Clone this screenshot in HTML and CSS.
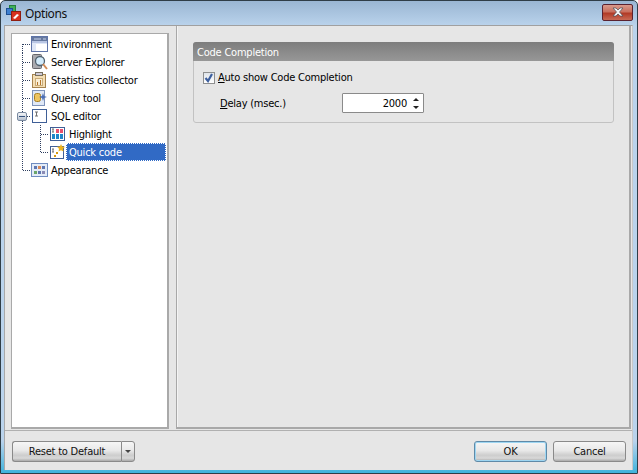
FILE: index.html
```html
<!DOCTYPE html>
<html lang="en">
<head>
    <meta charset="UTF-8">
    <title>Options</title>
    <link rel="stylesheet" href="styles.css">
</head>
<body>
    <div class="window">
        <div class="titlebar">
            <svg class="app-icon" width="16" height="16" viewBox="0 0 16 16">
                <rect x="3.500" y=".5" width="6" height="6" fill="#3fb05a" stroke="#23803c"/>
                <rect x=".5" y="3.500" width="6" height="6" fill="#3c7fd0" stroke="#1d4f94"/>
                <rect x="5.500" y="6.500" width="9" height="9" fill="#d8321e" stroke="#8f1d10"/>
                <path d="M7 13l4-4 2 1-4 4z" fill="#fff"/>
            </svg>
            <span class="title">Options</span>
            <div class="close">
                <svg width="16" height="10" viewBox="0 0 16 10"><path d="M3 1h3l2 2 2-2h3l-3.500 4 3.500 4h-3l-2-2-2 2h-3l3.500-4z" fill="#f2f2f2" stroke="#4a4a55" stroke-width=".7"/></svg>
            </div>
        </div>
        <div class="client">
            <div class="main">
                <ul class="tree">
                    <li class="row">
                        <svg class="lines" width="10" height="18"><path d="M.5 9V18M1 9.500H9" class="dots"/></svg>
                        <svg class="icon" width="17" height="16" viewBox="0 0 17 16"><rect x=".5" y=".5" width="16" height="15" fill="#dfe7f7" stroke="#5f74a8"/><rect x="1" y="1" width="15" height="4" fill="#66799f"/><path d="M3 3h7M12 3h3" stroke="#c9d3ea"/><rect x="1" y="5" width="15" height="2" fill="#b9c6e4"/><rect x="5" y="8" width="11" height="7" fill="#fff"/></svg>
                        <span class="label">Environment</span>
                    </li>
                    <li class="row">
                        <svg class="lines" width="10" height="18"><path d="M.5 0V18M1 9.500H9" class="dots"/></svg>
                        <svg class="icon" width="17" height="16" viewBox="0 0 17 16"><rect x="1.500" y=".5" width="9" height="14" rx="1" fill="#a9a9ae" stroke="#66666b"/><circle cx="9" cy="7" r="4.500" fill="#d3ebfa" stroke="#50616f" stroke-width="1.300"/><path d="M12 10l4 5" stroke="#d08a55" stroke-width="2"/></svg>
                        <span class="label">Server Explorer</span>
                    </li>
                    <li class="row">
                        <svg class="lines" width="10" height="18"><path d="M.5 0V18M1 9.500H9" class="dots"/></svg>
                        <svg class="icon" width="17" height="16" viewBox="0 0 17 16"><rect x="1.500" y="2.500" width="13" height="13" fill="#f4deb4" stroke="#a5834f"/><rect x="4.500" y=".5" width="7" height="3" fill="#cfcbd8" stroke="#77705f"/><rect x="4.500" y="6.500" width="7" height="7" fill="#f9eed5" stroke="#c9ab78"/><rect x="6" y="10" width="1" height="3" fill="#b5752a"/><rect x="9" y="8" width="1" height="5" fill="#b5752a"/></svg>
                        <span class="label">Statistics collector</span>
                    </li>
                    <li class="row">
                        <svg class="lines" width="10" height="18"><path d="M.5 0V18M1 9.500H9" class="dots"/></svg>
                        <svg class="icon" width="17" height="16" viewBox="0 0 17 16"><rect x="1.500" y=".5" width="12" height="15" fill="#dfe8f6" stroke="#7e93bb"/><rect x="3.500" y="3.500" width="6" height="8" rx="2" fill="#edc45f" stroke="#a67f25"/><path d="M12 3l1 3 3 1-3 1-1 3-1-3-3-1 3-1z" fill="#4b6fb5"/></svg>
                        <span class="label">Query tool</span>
                    </li>
                    <li class="row">
                        <svg class="lines" width="10" height="18"><path d="M.5 0V18M1 9.500H9" class="dots"/></svg>
                        <span class="expander"></span>
                        <svg class="icon" width="17" height="16" viewBox="0 0 17 16"><rect x="1.500" y="1.500" width="14" height="13" fill="#fff" stroke="#3f5f97"/><path d="M4 4h3M5.500 4v4M4 8h3" stroke="#707070" fill="none"/></svg>
                        <span class="label">SQL editor</span>
                    </li>
                    <li class="row">
                        <svg class="lines" width="28" height="18"><path d="M.5 0V18M18.500 0V18M19 9.500H27" class="dots"/></svg>
                        <svg class="icon" width="17" height="16" viewBox="0 0 17 16"><rect x="1.500" y="1.500" width="14" height="13" fill="#fff" stroke="#3f5f97"/><path d="M3 3h2M4 3v3M3 6h2" stroke="#707070" fill="none"/><rect x="7" y="3" width="3" height="4" fill="#e8506e"/><rect x="11" y="3" width="3" height="4" fill="#e8506e"/><rect x="3" y="8" width="3" height="5" fill="#1f86c9"/><rect x="7" y="8" width="3" height="5" fill="#1f86c9"/><rect x="11" y="8" width="3" height="5" fill="#1f86c9"/></svg>
                        <span class="label">Highlight</span>
                    </li>
                    <li class="row">
                        <svg class="lines" width="28" height="18"><path d="M.5 0V18M18.500 0V9.500M19 9.500H27" class="dots"/></svg>
                        <svg class="icon" width="17" height="16" viewBox="0 0 17 16"><rect x="1.500" y="2.500" width="13" height="12" fill="#fff" stroke="#3f5f97"/><path d="M3 5h2M4 5v3M3 8h2" stroke="#707070" fill="none"/><path d="M12 0l1.200 2.500 2.800.3-2 2 .5 2.700-2.500-1.300-2.500 1.300.5-2.700-2-2 2.800-.3z" fill="#eeb421"/><rect x="7" y="8" width="2" height="2" fill="#d59a10"/><rect x="5" y="11" width="2" height="2" fill="#d59a10"/></svg>
                        <span class="label selected">Quick code</span>
                    </li>
                    <li class="row">
                        <svg class="lines" width="10" height="18"><path d="M.5 0V9.500M1 9.500H9" class="dots"/></svg>
                        <svg class="icon" width="17" height="16" viewBox="0 0 17 16"><rect x=".5" y="1.500" width="16" height="13" fill="#e4ecf8" stroke="#6f8cc0"/><rect x="3" y="4" width="3" height="3" fill="#5f77b0"/><rect x="7" y="4" width="3" height="3" fill="#d98a5a"/><rect x="11" y="4" width="3" height="3" fill="#5f77b0"/><rect x="3" y="9" width="3" height="3" fill="#6aa56a"/><rect x="7" y="9" width="3" height="3" fill="#5f77b0"/><rect x="11" y="9" width="3" height="3" fill="#8b8bb5"/></svg>
                        <span class="label">Appearance</span>
                    </li>
                </ul>
                <div class="panel">
                    <div class="group">
                        <div class="group-head">Code Completion</div>
                        <div class="group-body">
                            <div class="check-row">
                                <span class="checkbox">
                                    <svg width="10" height="10" viewBox="0 0 10 10"><path d="M1.500 5l2.500 3 4-7" fill="none" stroke="#3d5f9e" stroke-width="2.200"/></svg>
                                </span>
                                <span class="check-text"><u>A</u>uto show Code Completion</span>
                            </div>
                            <div class="delay-row">
                                <span class="delay-label"><u>D</u>elay (msec.)</span>
                                <div class="spin">
                                    <span class="spin-value">2000</span>
                                    <span class="spin-arrows"><i class="up"></i><i class="down"></i></span>
                                </div>
                            </div>
                        </div>
                    </div>
                </div>
            </div>
            <div class="footer">
                <div class="split">
                    <div class="button reset">Reset to Default</div>
                    <div class="button drop"><i></i></div>
                </div>
                <div class="actions">
                    <div class="button default">OK</div>
                    <div class="button">Cancel</div>
                </div>
            </div>
        </div>
    </div>
</body>
</html>
```

FILE: styles.css
```css
* {
    box-sizing: border-box;
}
body {
    margin: 0;
    width: 638px;
    height: 474px;
    overflow: hidden;
    font-family: "DejaVu Sans Condensed", "DejaVu Sans", sans-serif;
    font-stretch: condensed;
    font-size: 11px;
    letter-spacing: -.22px;
    color: #000;
}
.window {
    width: 638px;
    height: 474px;
    display: flex;
    flex-direction: column;
    padding: 0 4px 3px 3px;
    border: 1px solid #2f3d47;
    border-radius: 5px 5px 0 0;
    background: linear-gradient(#9ab6d3, #bad3ec 25px, #bad3ec 440px, #3fb3dc);
}
.titlebar {
    height: 24px;
    flex: none;
    display: flex;
    align-items: center;
    padding-left: 2px;
}
.app-icon {
    margin-right: 3px;
}
.title {
    font-family: "Noto Sans", sans-serif;
    font-stretch: normal;
    font-size: 12px;
    letter-spacing: -.4px;
    color: #111;
}
.close {
    margin-left: auto;
    margin-top: -2px;
    width: 31px;
    height: 17px;
    display: flex;
    align-items: center;
    justify-content: center;
    border: 1px solid #5a2230;
    border-radius: 2px;
    background: linear-gradient(#d99a8c, #c9705e 45%, #b13a26 55%, #c86a55);
}
.client {
    flex: 1;
    display: flex;
    flex-direction: column;
    background: #e6e6e6;
    border-top: 1px solid #a0a0a0;
    border-left: 1px solid #a8a8a8;
    border-right: 1px solid #c8c8c8;
}
.main {
    height: 405px;
    flex: none;
    display: flex;
    padding: 0 1px 0 6px;
    border-bottom: 1px solid #b0b0b0;
}
.tree {
    width: 158px;
    height: 396px;
    margin: 7px 7px 0 0;
    padding: 1px 0 0 10px;
    list-style: none;
    background: #fff;
    border: 1px solid #a9a9a9;
    border-width: 1px 2px 2px 1px;
    flex: none;
}
.row {
    height: 18px;
    display: flex;
    align-items: center;
    white-space: nowrap;
    position: relative;
}
.lines {
    flex: none;
    margin-right: -1px;
}
.dots {
    fill: none;
    stroke: #2f3f60;
    stroke-width: 1;
    stroke-dasharray: 1 1;
}
.expander {
    position: absolute;
    left: -5px;
    top: 5px;
    width: 10px;
    height: 9px;
    border: 1px solid #7a8aa0;
    border-radius: 2px;
    background: linear-gradient(#f4f6f8, #b7c1cf);
}
.expander::after {
    content: "";
    position: absolute;
    left: 1px;
    top: 3px;
    width: 6px;
    height: 1px;
    background: #33507c;
}
.icon {
    flex: none;
}
.label {
    margin-left: 3px;
    height: 18px;
    line-height: 19px;
}
.selected {
    flex: 1;
    margin-left: 0;
    margin-right: 1px;
    padding-left: 2px;
    color: #fff;
    background: #316ac5;
    border: 1px dotted #fff;
    line-height: 17px;
}
.panel {
    flex: 1;
    height: 403px;
    padding: 16px 15px 0 16px;
    border: 1px solid #a8a8a8;
    border-width: 0 2px 2px 1px;
    box-shadow: inset 1px 0 0 #f4f4f4;
}
.group {
    height: 81px;
    border: 1px solid #c2c2c2;
    border-radius: 3px;
}
.group-head {
    height: 19px;
    margin: -1px -1px 0;
    padding-left: 4px;
    line-height: 21px;
    color: #fff;
    border-radius: 3px 3px 0 0;
    background: linear-gradient(#7d7d7d, #979797);
}
.group-body {
    padding: 11px 0 0 9px;
}
.check-row {
    display: flex;
    align-items: center;
    height: 12px;
}
.checkbox {
    width: 12px;
    height: 12px;
    margin-right: 3px;
    display: flex;
    align-items: center;
    justify-content: center;
    border: 1px solid #8e8f8f;
    background: linear-gradient(#dfe4ea, #fff);
}
.check-text {
    margin-top: -2px;
}
.delay-row {
    display: flex;
    align-items: center;
    margin-top: 9px;
    padding-left: 17px;
}
.delay-label {
    width: 122px;
}
.spin {
    width: 82px;
    height: 20px;
    display: flex;
    align-items: center;
    justify-content: flex-end;
    padding-right: 2px;
    background: #fff;
    border: 1px solid #8a8a8a;
    border-radius: 1px;
}
.spin-value {
    margin-right: 3px;
}
.spin-arrows {
    width: 11px;
    height: 16px;
    display: flex;
    flex-direction: column;
    justify-content: center;
    align-items: center;
    gap: 5px;
}
.spin-arrows i {
    width: 0;
    height: 0;
    border: 3px solid transparent;
}
.spin-arrows .up {
    border-top: 0;
    border-bottom: 3px solid #222;
}
.spin-arrows .down {
    border-bottom: 0;
    border-top: 3px solid #222;
}
.footer {
    flex: 1;
    display: flex;
    justify-content: space-between;
    align-items: flex-start;
    padding: 10px 6px 0 7px;
}
.split, .actions {
    display: flex;
}
.actions {
    gap: 6px;
}
.button {
    width: 73px;
    height: 21px;
    display: flex;
    align-items: center;
    justify-content: center;
    border: 1px solid #8a8a8a;
    border-radius: 3px;
    color: #111;
    background: linear-gradient(#f6f6f6, #e8e8e8 45%, #cdcdcd 70%, #d8d8d8 85%, #aaa);
}
.reset {
    width: 109px;
    border-radius: 3px 0 0 3px;
    border-right: 0;
}
.drop {
    width: 14px;
    border-radius: 0 3px 3px 0;
}
.drop i {
    width: 0;
    height: 0;
    border: 3px solid transparent;
    border-bottom: 0;
    border-top: 3px solid #444;
}
.default {
    border-color: #5f8aa8;
    box-shadow: inset 0 0 0 1px #9ed6f2;
}
```
